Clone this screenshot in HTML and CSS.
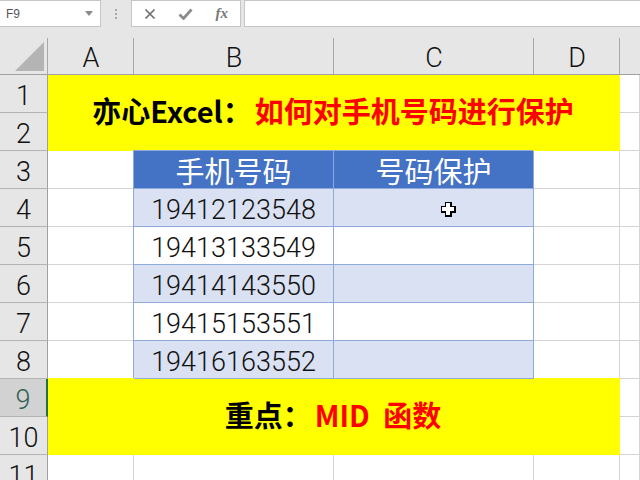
FILE: index.html
```html
<!DOCTYPE html>
<html lang="zh">
<head>
<meta charset="utf-8">
<title>亦心Excel</title>
<link rel="stylesheet" href="styles.css">
</head>
<body>
<div class="app">
  <div class="formula-bar">
    <div class="name-box">
      <span class="name-text">F9</span>
      <svg class="name-arrow" width="8" height="5" viewBox="0 0 8 5"><path d="M0 0h8L4 5z" fill="#8a8a8a"/></svg>
    </div>
    <div class="grip"><i></i><i></i><i></i></div>
    <div class="fx-box">
      <svg width="12" height="12" viewBox="0 0 12 12"><path d="M1.5 1.5l9 9M10.5 1.5l-9 9" stroke="#6f6f6f" stroke-width="1.7" fill="none"/></svg>
      <svg width="15" height="12" viewBox="0 0 15 12"><path d="M1.5 6.5l4 4 8-9" stroke="#8c8c8c" stroke-width="2.8" fill="none"/></svg>
      <span class="fx">fx</span>
    </div>
    <div class="formula-input"></div>
  </div>
  <div class="sheet">
    <div class="corner"><svg class="corner-tri" width="29" height="29" viewBox="0 0 29 29"><path d="M29 0v29H0z" fill="#b4b4b4"/></svg></div>
    <div class="col-head">A</div>
    <div class="col-head">B</div>
    <div class="col-head">C</div>
    <div class="col-head">D</div>
    <div class="col-head col-end"></div>

    <div class="row-head">1</div>
    <div class="banner banner-top"><span>亦心Excel：</span><span class="red">如何对手机号码进行保护</span></div>
    <div class="cell"></div>
    <div class="row-head">2</div>
    <div class="cell"></div>

    <div class="row-head">3</div>
    <div class="cell"></div>
    <div class="cell th">手机号码</div>
    <div class="cell th">号码保护</div>
    <div class="cell"></div>
    <div class="cell"></div>

    <div class="row-head">4</div>
    <div class="cell"></div>
    <div class="cell td band">19412123548</div>
    <div class="cell td band cursor-cell">
      <svg class="cursor" width="15" height="15" viewBox="0 0 15 15" shape-rendering="crispEdges"><path d="M4 0h7v4h4v7h-4v4H4v-4H0V4h4z" fill="#000"/><path d="M5 1h4v4h4v4H9v4H5V9H1V5h4z" fill="#fff"/></svg>
    </div>
    <div class="cell"></div>
    <div class="cell"></div>

    <div class="row-head">5</div>
    <div class="cell"></div>
    <div class="cell td">19413133549</div>
    <div class="cell td"></div>
    <div class="cell"></div>
    <div class="cell"></div>

    <div class="row-head">6</div>
    <div class="cell"></div>
    <div class="cell td band">19414143550</div>
    <div class="cell td band"></div>
    <div class="cell"></div>
    <div class="cell"></div>

    <div class="row-head">7</div>
    <div class="cell"></div>
    <div class="cell td">19415153551</div>
    <div class="cell td"></div>
    <div class="cell"></div>
    <div class="cell"></div>

    <div class="row-head">8</div>
    <div class="cell"></div>
    <div class="cell td band">19416163552</div>
    <div class="cell td band"></div>
    <div class="cell"></div>
    <div class="cell"></div>

    <div class="row-head selected">9</div>
    <div class="banner banner-bottom"><span>重点：</span><span class="red">MID 函数</span></div>
    <div class="cell"></div>
    <div class="row-head">10</div>
    <div class="cell"></div>

    <div class="row-head">11</div>
    <div class="cell"></div>
    <div class="cell"></div>
    <div class="cell"></div>
    <div class="cell"></div>
    <div class="cell"></div>
  </div>
</div>
</body>
</html>
```
FILE: styles.css
```css
* { box-sizing: border-box; }
html, body { margin: 0; padding: 0; background: #fff; }
.app {
  width: 640px;
  height: 480px;
  overflow: hidden;
  font-family: Roboto, "Noto Sans CJK SC", sans-serif;
}
.formula-bar {
  display: flex;
  height: 28px;
  background: #e6e6e6;
  padding-bottom: 1px;
}
.name-box {
  width: 101px;
  background: #fff;
  border: 1px solid #c6c6c6;
  border-left: 0;
  display: flex;
  align-items: center;
  justify-content: space-between;
  padding: 0 7px 0 6px;
}
.name-text {
  font: 12px "Liberation Sans", sans-serif;
  color: #555;
}
.grip {
  width: 30px;
  display: flex;
  flex-direction: column;
  align-items: center;
  justify-content: center;
  gap: 2px;
}
.grip i { width: 2px; height: 2px; background: #a8a8a8; }
.fx-box {
  width: 110px;
  background: #fff;
  border: 1px solid #c6c6c6;
  display: flex;
  align-items: center;
  justify-content: space-between;
  padding: 0 12px 0 12px;
}
.fx {
  font: italic 700 15px "Liberation Serif", serif;
  color: #777;
}
.formula-input {
  flex: 1;
  margin-left: 3px;
  background: #fff;
  border: 1px solid #c6c6c6;
  border-right: 0;
}
.sheet {
  display: grid;
  grid-template-columns: 48px 86px 200px 200px 86px 20px;
  grid-template-rows: 47px repeat(11, 38px);
  background: #e6e6e6;
}
.corner {
  border-right: 1px solid #a8a8a8;
  border-bottom: 1px solid #a0a0a0;
  margin-top: 10px;
  position: relative;
}
.corner-tri { position: absolute; left: 15px; top: 4px; }
.col-head {
  margin-top: 10px;
  border-right: 1px solid #a8a8a8;
  border-bottom: 1px solid #a0a0a0;
  display: flex;
  align-items: center;
  justify-content: center;
  padding: 3px 0 0 1px;
  font-size: 27px;
  font-weight: 300;
  line-height: 30px;
  color: #111;
}
.col-end { border-right: 0; }
.row-head {
  background: #e6e6e6;
  border-right: 1px solid #a0a0a0;
  border-bottom: 1px solid #b4b4b4;
  display: flex;
  align-items: center;
  justify-content: center;
  padding-top: 5px;
  font-size: 27px;
  font-weight: 300;
  color: #111;
}
.selected {
  background: #d2d2d2;
  border-right: 2px solid #217346;
  color: #2f5f55;
}
.cell {
  background: #fff;
  border-right: 1px solid #d4d4d4;
  border-bottom: 1px solid #d4d4d4;
  display: flex;
  align-items: center;
  justify-content: center;
}
.banner {
  grid-column: span 4;
  grid-row: span 2;
  background: #ff0;
  display: flex;
  align-items: center;
  justify-content: center;
  font-size: 29px;
  font-weight: 700;
  color: #000;
  font-family: "Noto Sans CJK SC", sans-serif;
  white-space: pre;
}
.banner-top { padding: 0 2px 7px 0; }
.banner-bottom { padding: 0 2px 6px 0; box-shadow: 0 -1px 0 #ff0; }
.red { color: #f00; margin-left: 3px; }
.banner-bottom .red { word-spacing: 7px; }
.th, .td {
  z-index: 1;
  border-right: 1px solid #8eaadb;
  border-bottom: 1px solid #8eaadb;
  box-shadow: -1px -1px 0 #8eaadb;
}
.th {
  background: #4472c4;
  color: #fff;
  font-size: 29px;
}
.td {
  color: #111;
  padding-top: 5px;
  font-size: 27px;
  font-weight: 300;
}
.band { background: #d9e1f2; }
.cursor-cell { position: relative; }
.cursor { position: absolute; left: 107px; top: 13px; }
```
